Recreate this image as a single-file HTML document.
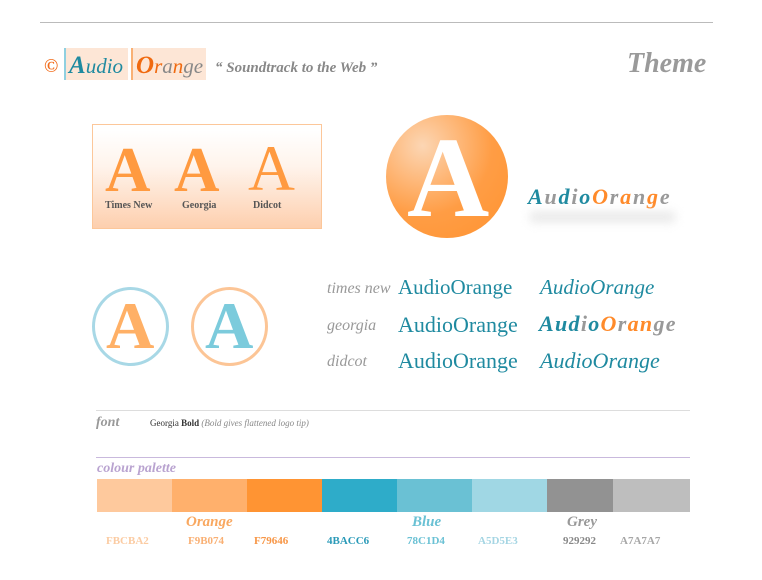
<!DOCTYPE html>
<html><head><meta charset="utf-8"><style>
body{margin:0;width:762px;height:580px;background:#fff;position:relative;overflow:hidden;font-family:"Liberation Serif",serif}
.a{position:absolute;white-space:nowrap}
.t{font-family:"Liberation Serif",serif}
</style></head><body>
<div class="a" style="left:40px;top:22px;width:673px;height:1px;background:#bbb"></div>
<div class="a t" style="left:44px;top:56px;font-size:19px;color:#f26d1c;font-weight:bold">©</div>
<div class="a" style="left:64px;top:48px;width:62px;height:32px;background:#fde6d6;border-left:2px solid #8fd0e0"></div>
<div class="a" style="left:131px;top:48px;width:73px;height:32px;background:#fde6d6;border-left:2px solid #f9b074"></div>
<div class="a" style="left:69px;top:52px;font-size:21px;font-style:italic;color:#1f8aa0"><span style="font-size:25px;font-weight:bold">A</span>udio</div>
<div class="a" style="left:136px;top:52px;font-size:21px;font-style:italic;color:#f06a10"><span style="font-size:25px;font-weight:bold">O</span>r<span style="color:#888">a</span>n<span style="color:#888">ge</span></div>
<div class="a t" style="left:215px;top:60px;font-size:15px;font-style:italic;font-weight:bold;color:#888">“ Soundtrack to the Web ”</div>
<div class="a t" style="left:627px;top:48px;font-size:28px;font-style:italic;font-weight:bold;color:#9a9a9a">Theme</div>

<div class="a" style="left:92px;top:124px;width:228px;height:103px;border:1px solid #fcc79a;background:linear-gradient(#fff 5%,#fff4ec 40%,#fdcfae)"></div>
<div class="a t" style="left:105px;top:134px;font-size:63px;font-weight:bold;color:#ff9a40">A</div>
<div class="a" style="left:174px;top:134px;font-size:63px;font-weight:bold;color:#ff9a40">A</div>
<div class="a t" style="left:248px;top:132px;font-size:65px;color:#ff9a40">A</div>
<div class="a t" style="left:105px;top:200px;font-size:10px;font-weight:bold;color:#555">Times New</div>
<div class="a t" style="left:182px;top:200px;font-size:10px;font-weight:bold;color:#555">Georgia</div>
<div class="a t" style="left:253px;top:200px;font-size:10px;font-weight:bold;color:#555">Didcot</div>

<div class="a" style="left:386px;top:115px;width:122px;height:123px;border-radius:50%;background:radial-gradient(circle at 30% 25%,#fcd6b4,#ff9d45 55%,#ff9330)"></div>
<div class="a t" style="left:407px;top:112px;font-size:114px;font-weight:bold;color:#fff">A</div>
<div class="a" style="left:528px;top:184px;font-size:22px;font-style:italic;font-weight:bold;color:#1f8aa0;letter-spacing:1.8px">A<span style="color:#999">u</span>d<span style="color:#999">i</span>o<span style="color:#ff8a2a">O</span><span style="color:#999">r</span><span style="color:#ff8a2a">a</span><span style="color:#999">n</span><span style="color:#ff8a2a">g</span><span style="color:#999">e</span></div>
<div class="a" style="left:530px;top:212px;width:145px;height:10px;background:#ddd;filter:blur(5px);opacity:.7"></div>

<div class="a" style="left:92px;top:287px;width:71px;height:73px;border:3px solid #a8d8e6;border-radius:50%"></div>
<div class="a" style="left:191px;top:287px;width:71px;height:73px;border:3px solid #fcc596;border-radius:50%"></div>
<div class="a" style="left:106px;top:288px;font-size:67px;font-weight:bold;color:#ffb066">A</div>
<div class="a" style="left:205px;top:288px;font-size:67px;font-weight:bold;color:#7ccbdc">A</div>

<div class="a t" style="left:327px;top:280px;font-size:16px;font-style:italic;color:#999">times new</div>
<div class="a t" style="left:327px;top:317px;font-size:16px;font-style:italic;color:#999">georgia</div>
<div class="a t" style="left:327px;top:353px;font-size:16px;font-style:italic;color:#999">didcot</div>
<div class="a t" style="left:398px;top:275px;font-size:21px;color:#1f8aa0">AudioOrange</div>
<div class="a t" style="left:398px;top:312px;font-size:22px;color:#1f8aa0">AudioOrange</div>
<div class="a t" style="left:398px;top:348px;font-size:22px;color:#1f8aa0">AudioOrange</div>
<div class="a t" style="left:540px;top:275px;font-size:21px;font-style:italic;color:#1f8aa0">AudioOrange</div>
<div class="a" style="left:539px;top:311px;font-size:22px;font-style:italic;font-weight:bold;color:#1f8aa0;letter-spacing:1.3px">Aud<span style="color:#999">i</span>o<span style="color:#ff8a2a">O</span><span style="color:#999">r</span><span style="color:#ff8a2a">an</span><span style="color:#999">ge</span></div>
<div class="a t" style="left:540px;top:348px;font-size:22px;font-style:italic;color:#1f8aa0">AudioOrange</div>

<div class="a" style="left:96px;top:410px;width:594px;height:1px;background:#ddd"></div>
<div class="a t" style="left:96px;top:415px;font-size:14px;font-style:italic;font-weight:bold;color:#999">font</div>
<div class="a t" style="left:150px;top:418px;font-size:9px;color:#333">Georgia <b>Bold</b> <i style="color:#888">(Bold gives flattened logo tip)</i></div>
<div class="a" style="left:96px;top:457px;width:594px;height:1px;background:#c9b9dd"></div>
<div class="a t" style="left:97px;top:461px;font-size:14px;font-style:italic;font-weight:bold;color:#b9a3d0">colour palette</div>

<div class="a" style="left:97px;top:479px;width:75px;height:33px;background:#fec99d"></div>
<div class="a" style="left:172px;top:479px;width:75px;height:33px;background:#ffb06c"></div>
<div class="a" style="left:247px;top:479px;width:75px;height:33px;background:#ff9433"></div>
<div class="a" style="left:322px;top:479px;width:75px;height:33px;background:#2eacc9"></div>
<div class="a" style="left:397px;top:479px;width:75px;height:33px;background:#6ac1d4"></div>
<div class="a" style="left:472px;top:479px;width:75px;height:33px;background:#a0d7e4"></div>
<div class="a" style="left:547px;top:479px;width:66px;height:33px;background:#929292"></div>
<div class="a" style="left:613px;top:479px;width:77px;height:33px;background:#bebebe"></div>

<div class="a t" style="left:186px;top:514px;font-size:15px;font-style:italic;font-weight:bold;color:#f9a860">Orange</div>
<div class="a t" style="left:412px;top:514px;font-size:15px;font-style:italic;font-weight:bold;color:#6ac1d4">Blue</div>
<div class="a t" style="left:567px;top:514px;font-size:15px;font-style:italic;font-weight:bold;color:#999">Grey</div>
<div class="a t" style="left:106px;top:535px;font-size:11px;font-weight:bold;color:#fbcba2">FBCBA2</div>
<div class="a t" style="left:188px;top:535px;font-size:11px;font-weight:bold;color:#f9b074">F9B074</div>
<div class="a t" style="left:254px;top:535px;font-size:11px;font-weight:bold;color:#f79646">F79646</div>
<div class="a t" style="left:327px;top:535px;font-size:11px;font-weight:bold;color:#2a9ab8">4BACC6</div>
<div class="a t" style="left:407px;top:535px;font-size:11px;font-weight:bold;color:#6ac1d4">78C1D4</div>
<div class="a t" style="left:478px;top:535px;font-size:11px;font-weight:bold;color:#a5d5e3">A5D5E3</div>
<div class="a t" style="left:563px;top:535px;font-size:11px;font-weight:bold;color:#888">929292</div>
<div class="a t" style="left:620px;top:535px;font-size:11px;font-weight:bold;color:#a7a7a7">A7A7A7</div>
</body></html>
